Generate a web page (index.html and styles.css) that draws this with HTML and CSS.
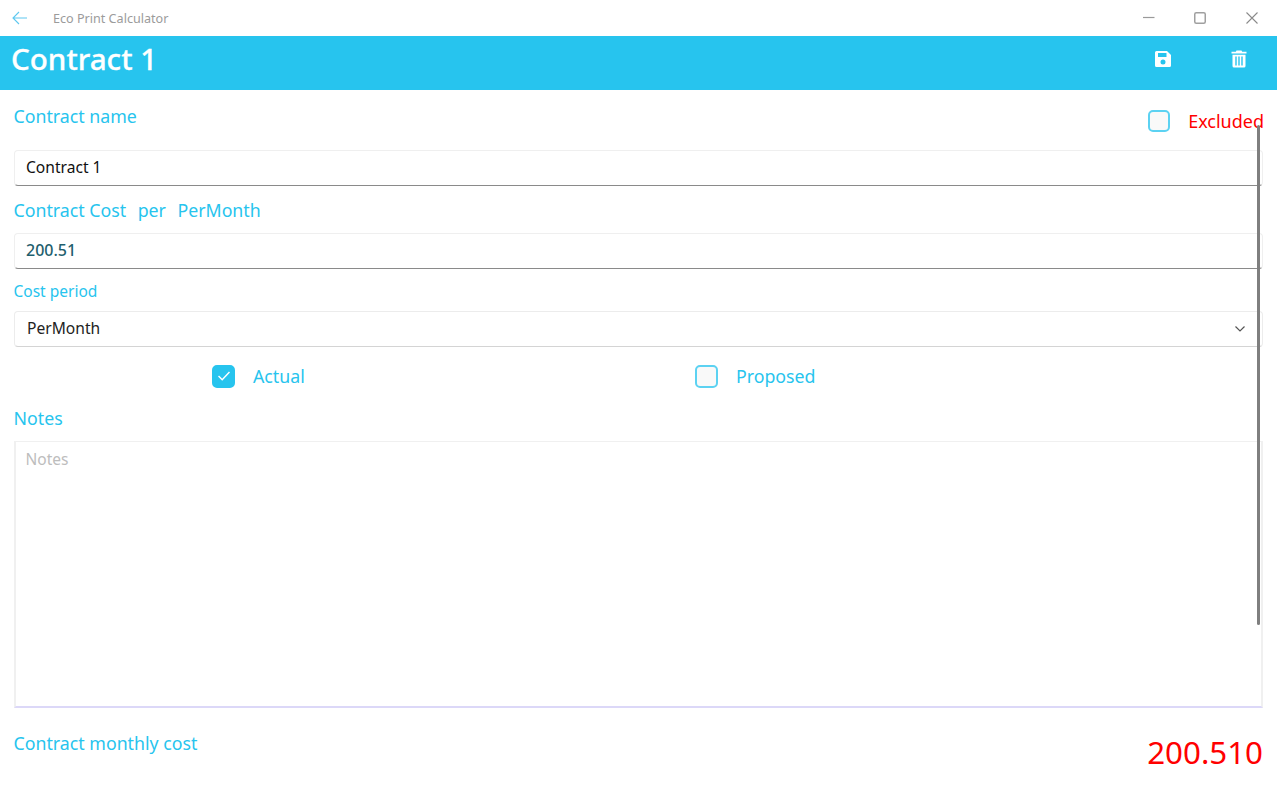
FILE: index.html
```html
<!DOCTYPE html>
<html lang="en">
<head>
<meta charset="utf-8">
<title>Eco Print Calculator</title>
<link rel="stylesheet" href="styles.css">
</head>
<body>
<div class="app">
  <div class="titlebar">
    <svg class="back" width="16" height="14" viewBox="0 0 16 14"><path d="M15 7H1M7 1 1 7l6 6" fill="none" stroke="#5ec8ef" stroke-width="1.1"/></svg>
    <span class="apptitle">Eco Print Calculator</span>
    <div class="winctl">
      <svg width="12" height="12" viewBox="0 0 12 12"><path d="M0 5.500h11.500" stroke="#9a9a9a" stroke-width="1.200"/></svg>
      <svg width="12" height="12" viewBox="0 0 12 12"><rect x=".75" y=".75" width="10.500" height="10.500" rx="1.500" fill="none" stroke="#a0a0a0" stroke-width="1.500"/></svg>
      <svg width="12" height="12" viewBox="0 0 12 12"><path d="M.5.500l11 11M11.500.500l-11 11" stroke="#8a8a8a" stroke-width="1.100"/></svg>
    </div>
  </div>
  <header class="header">
    <h1 class="title">Contract 1</h1>
    <div class="actions">
      <svg width="18" height="18" viewBox="0 0 18 18"><path fill-rule="evenodd" d="M2.500 1H13l4 4v10.500a1.500 1.500 0 0 1-1.500 1.500h-13A1.500 1.500 0 0 1 1 15.500v-13A1.500 1.500 0 0 1 2.500 1ZM4 3v4h8.500V3ZM9 9.500a2.500 2.500 0 1 0 0 5 2.500 2.500 0 0 0 0-5Z" fill="#fff"/></svg>
      <svg width="16" height="18" viewBox="0 0 16 18"><path fill-rule="evenodd" d="M5.500.5h5l.7 1.300H15.500v1.800H.5V1.800h4.300ZM1.500 4.700h13V16a1.500 1.500 0 0 1-1.500 1.500H3A1.500 1.500 0 0 1 1.500 16ZM4.300 6.500v9h1.400v-9ZM7.300 6.500v9h1.400v-9ZM10.300 6.500v9h1.400v-9Z" fill="#fff"/></svg>
    </div>
  </header>
  <main class="main">
    <div class="name-row">
      <label class="label label-name">Contract name</label>
      <div class="check-item excluded">
        <span class="box box-small"></span>
        <span class="excluded-text">Excluded</span>
      </div>
    </div>
    <div class="input strong">Contract 1</div>
    <div class="label cost-label"><span>Contract Cost</span><span>per</span><span>PerMonth</span></div>
    <div class="input teal">200.51</div>
    <div class="small-label">Cost period</div>
    <div class="select">
      <span>PerMonth</span>
      <svg width="10" height="6" viewBox="0 0 10 6"><path d="M.5.5 5 5 9.500.5" fill="none" stroke="#555" stroke-width="1.200"/></svg>
    </div>
    <div class="options">
      <div class="check-item opt-actual">
        <span class="box checked"><svg width="12" height="10" viewBox="0 0 12 10"><path d="M.5 5l3.700 3.700L11.500 1" fill="none" stroke="#fff" stroke-width="1.500"/></svg></span>
        <span class="check-text">Actual</span>
      </div>
      <div class="check-item opt-proposed">
        <span class="box"></span>
        <span class="check-text">Proposed</span>
      </div>
    </div>
    <div class="label notes-label">Notes</div>
    <div class="notes">Notes</div>
    <div class="total-row">
      <span class="label">Contract monthly cost</span>
      <span class="total">200.510</span>
    </div>
  </main>
  <div class="scrollbar"></div>
</div>
</body>
</html>
```
FILE: styles.css
```css
* { box-sizing: border-box; }
html, body { margin: 0; height: 100%; }
body { font-family: "Noto Sans", "Open Sans", sans-serif; background: #fff; overflow: hidden; }
.app { position: relative; width: 1277px; height: 787px; }

.titlebar { height: 36px; display: flex; align-items: center; padding-left: 12px; }
.back { margin-right: 25px; }
.apptitle { font-size: 12.600px; color: #9b9b9b; }
.winctl { margin-left: auto; display: flex; gap: 39.500px; padding-right: 19.500px; }

.header { height: 54px; background: #27c4ee; display: flex; justify-content: space-between; padding: 0 30px 0 11px; }
.title { margin: 3px 0 0; font-size: 29.600px; line-height: 40px; font-weight: 500; color: #fff; -webkit-text-stroke: 0.3px #fff; }
.actions { display: flex; gap: 59px; padding-top: 13.500px; align-items: flex-start; }

.main { padding: 0 14px 0 13.500px; }
.label { font-size: 17.750px; line-height: 24px; color: #27c4ee; }
.name-row { display: flex; justify-content: space-between; height: 60px; }
.label-name { margin-top: 14px; }
.check-item { display: flex; align-items: center; }
.excluded { height: 24px; margin-top: 19px; }
.box { width: 23px; height: 23px; border: 2px solid #5cd2f2; border-radius: 5px; background: #f9f9f9; display: flex; align-items: center; justify-content: center; }
.box-small { width: 22px; height: 22px; }
.box.checked { background: #27c4ee; border-color: #27c4ee; }
.excluded-text { margin-left: 18px; font-size: 18px; color: #f00; margin-right: -1px; }

.input { height: 36px; border: 1px solid #efefef; border-bottom: 1px solid #8a8a8a; border-radius: 4px; padding: 0 11.500px; font-size: 15.600px; line-height: 32px; }
.strong { color: #111; }
.teal { color: #1f5f6e; font-size: 16px; font-weight: 500; }
.cost-label { display: flex; gap: 11.500px; margin-top: 12px; margin-bottom: 11px; }

.small-label { margin-top: 12px; font-size: 15.500px; line-height: 21px; color: #27c4ee; }
.select { margin-top: 9px; height: 36px; border: 1px solid #ececec; border-bottom: 1px solid #d4d4d4; border-radius: 4px; padding: 0 17px 2px 12.500px; display: flex; align-items: center; justify-content: space-between; font-size: 15.600px; color: #222; }
.select svg { margin-top: 2px; }

.options { display: flex; height: 58px; padding-left: 198.500px; align-items: center; }
.opt-actual { width: 483px; }
.check-text { margin-left: 18px; font-size: 17.750px; color: #27c4ee; }

.notes-label { margin-top: 1px; margin-bottom: 11px; }
.notes { height: 267px; border: 1px solid #f0f0f0; border-width: 1px 2px 2px; border-bottom-color: #dcd8f8; padding: 5px 10px; font-size: 15.500px; line-height: 24px; color: #bdbdbd; }
.total-row { display: flex; justify-content: space-between; align-items: flex-start; }
.total-row .label { margin-top: 23px; }
.total { margin-top: 23px; font-size: 31.300px; line-height: 42px; color: #f00; }

.scrollbar { position: absolute; left: 1257px; top: 125px; width: 3px; height: 500px; background: #7f7f7f; border-radius: 2px; }
```
